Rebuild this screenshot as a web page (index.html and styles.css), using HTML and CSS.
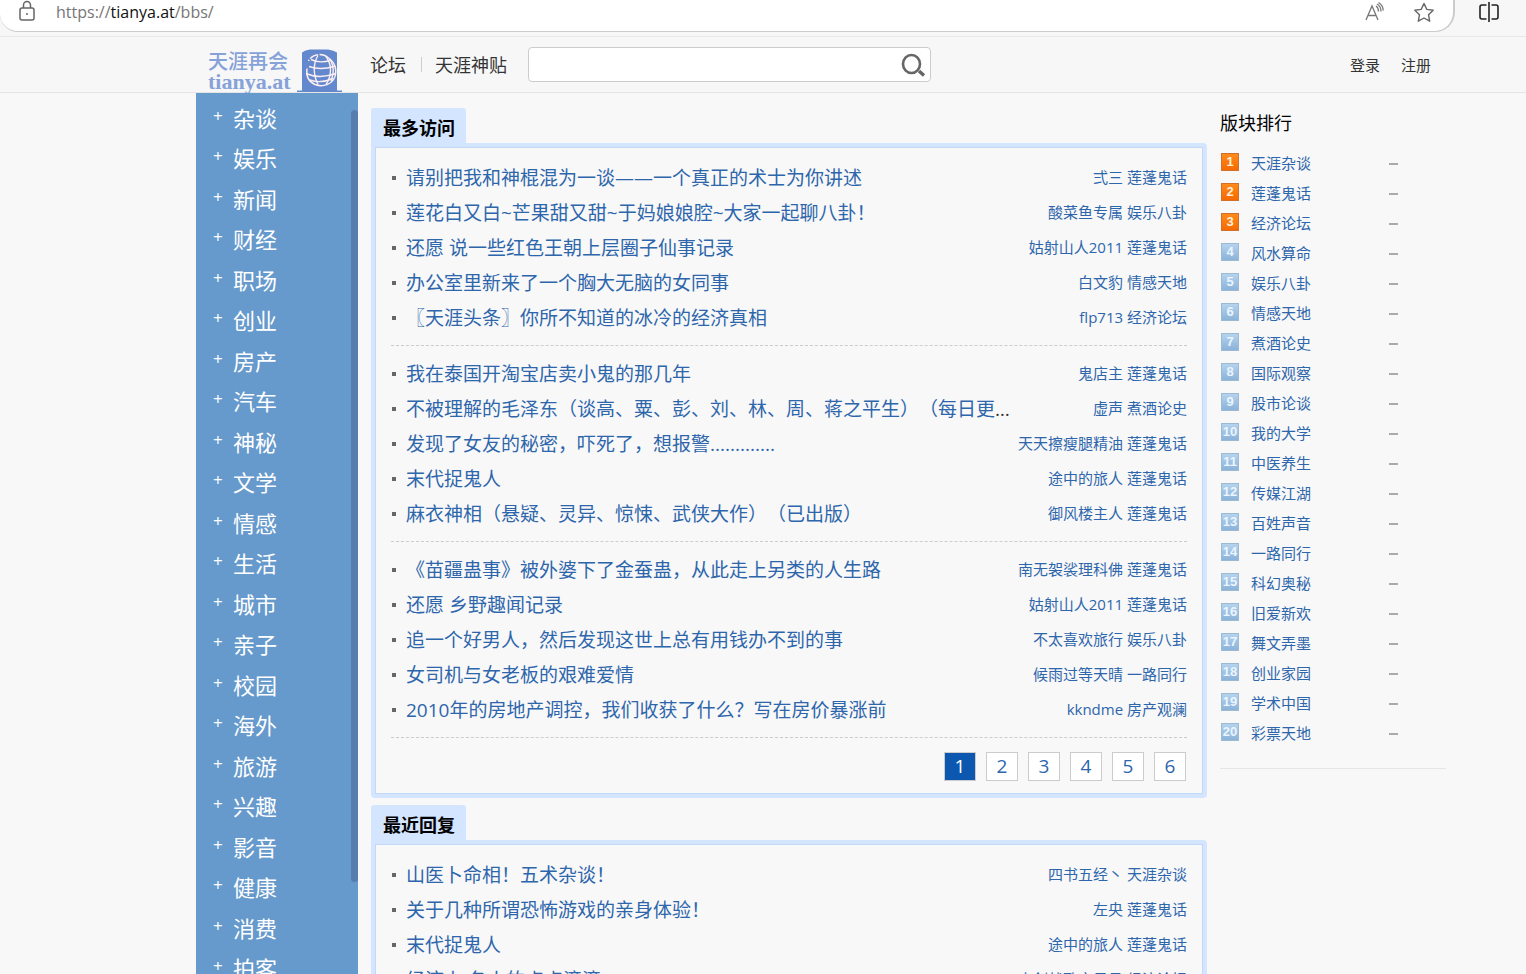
FILE: index.html
```html
<!DOCTYPE html>
<html lang="zh-CN">
<head>
<meta charset="utf-8">
<title>天涯再会</title>
<link rel="stylesheet" href="styles.css">
</head>
<body>
<div class="browser-bar">
  <div class="address">
    <svg class="lock" width="18" height="22" viewBox="0 0 18 22" fill="none" stroke="#666" stroke-width="1.5"><rect x="2" y="8" width="14" height="12" rx="2"/><path d="M5.500 8V5a3.500 3.500 0 0 1 7 0v3"/><circle cx="9" cy="14" r="1" fill="#666" stroke="none"/></svg>
    <span class="url">https://<b>tianya.at</b>/bbs/</span>
    <button class="icon-btn" aria-label="朗读"><svg width="22" height="22" viewBox="0 0 22 22" fill="none" stroke="#777" stroke-width="1.300"><path d="M2 19L8 5l6 14M4.200 14.500h7.600M12 5c1.500 1 2.500 3 2.500 5.500M13 3c2.500 1.500 4 4 4 7.500M14.500 1.500c3 2 4.700 4.500 4.700 8"/></svg></button>
    <button class="icon-btn" aria-label="收藏"><svg width="22" height="22" viewBox="0 0 22 22" fill="none" stroke="#666" stroke-width="1.400" stroke-linejoin="round"><path d="M11 2.500l2.800 5.900 6.400.8-4.700 4.500 1.200 6.500L11 17l-5.700 3.200 1.200-6.500L1.800 9.200l6.400-.8z"/></svg></button>
  </div>
  <button class="icon-btn split" aria-label="拆分屏幕"><svg width="20" height="22" viewBox="0 0 20 22" fill="none" stroke="#222" stroke-width="1.600"><path d="M7.500 4H3a2 2 0 0 0-2 2v10a2 2 0 0 0 2 2h4.500M12.500 4H17a2 2 0 0 1 2 2v10a2 2 0 0 1-2 2h-4.500M10 1v20"/></svg></button>
</div>

<header class="site-header">
  <a class="logo" href="#">
    <span class="logo-text"><span class="logo-cn">天涯再会</span><span class="logo-en">tianya.at</span></span>
    <svg width="46" height="43" viewBox="0 0 46 43"><path d="M0 43v-1.500h5V3.500Q8 1 13 .5h18q6 1 9 3v38h5V43z" fill="#6488cd"/><g fill="none" stroke="#fbeff3" stroke-width="1.400"><path d="M31 8.500C25 3.500 15 5 11.500 12" stroke-dasharray="9 1.500"/><path d="M31 8.500c7 5 9 12 7 19-3 8-12 11-20 8-7-3-9-9-8-16"/><path d="M14 10.500c6 3 12 3 19 1M12 17.500c8 3 17 2.500 26-.5M9 24.500c9 4 20 3.500 30 0M13 31c7 2.500 15 2 23-1.500"/><path d="M21 6.500c-5 8-5 19 0 29M29 7.500c6 8 6 19 0 28M33 10c4 7 4 15 1 22"/></g></svg>
  </a>
  <nav class="top-nav"><a href="#">论坛</a><a href="#">天涯神贴</a></nav>
  <form class="search">
    <input type="text" aria-label="搜索">
    <button type="button" aria-label="搜索"><svg width="26" height="26" viewBox="0 0 26 26" fill="none" stroke="#666"><ellipse cx="11.500" cy="12" rx="8.500" ry="9" stroke-width="2.600"/><path d="M19 19l5 4.500" stroke-width="3.400"/></svg></button>
  </form>
  <div class="account"><a href="#">登录</a><a href="#">注册</a></div>
</header>

<div class="page">
  <nav class="side">
    <ul id="side-list"></ul>
    <div class="thumb"></div>
  </nav>
  <main class="main">
    <section class="block">
      <h2>最多访问</h2>
      <div class="panel">
        <div id="popular"></div>
        <nav class="pager"><a class="on" href="#">1</a><a href="#">2</a><a href="#">3</a><a href="#">4</a><a href="#">5</a><a href="#">6</a></nav>
      </div>
    </section>
    <section class="block">
      <h2>最近回复</h2>
      <div class="panel"><div id="recent"></div></div>
    </section>
  </main>
  <aside class="rank">
    <h3>版块排行</h3>
    <ol id="rank-list"></ol>
  </aside>
</div>
<script src="script.js"></script>
</body>
</html>
```
FILE: styles.css
```css
* { box-sizing: border-box; }
body {
  margin: 0;
  height: 100vh;
  overflow: hidden;
  display: flex;
  flex-direction: column;
  background: #f8f8f8;
  color: #333;
  font-family: "Open Sans", "Noto Sans CJK SC", sans-serif;
  text-spacing-trim: space-all;
}
a { color: #2e66ac; text-decoration: none; }
ul, ol { list-style: none; margin: 0; padding: 0; }
h2, h3 { margin: 0; }
button { border: 0; padding: 0; background: none; }

.browser-bar {
  flex: none;
  display: flex;
  align-items: flex-start;
  height: 37px;
  padding-right: 27px;
  background: #f7f7f7;
  border-bottom: 1px solid #e8e8e8;
}
.address {
  flex: 1;
  display: flex;
  align-items: flex-start;
  height: 32px;
  padding: 0 18px 0 18px;
  background: #fff;
  border: 1px solid #ccc;
  border-width: 0 2px 1px 0;
  border-radius: 0 0 20px 18px;
}
.url {
  flex: 1;
  margin-left: 20px;
  color: #767676;
  font-size: 16px;
  line-height: 24px;
}
.url b { color: #111; font-weight: 400; }
.icon-btn { height: 24px; margin-left: 27px; }
.icon-btn svg, .lock { display: block; }
.split { margin-left: 24px; }

.site-header {
  flex: none;
  display: flex;
  align-items: center;
  height: 56px;
  padding: 0 95px 0 196px;
  background: #f7f7f7;
  border-bottom: 1px solid #e5e5e5;
}
.logo {
  display: flex;
  align-self: stretch;
  align-items: flex-end;
  width: 174px;
  padding-left: 12px;
  color: #86a2d8;
}
.logo svg { margin-left: 8px; flex: none; }
.logo-text { display: flex; flex-direction: column; width: 81px; }
.logo-cn { font-size: 20px; line-height: 20px; font-weight: 500; }
.logo-en {
  font-family: "Liberation Serif", serif;
  font-size: 22px;
  line-height: 20px;
  font-weight: 700;
}
.top-nav { display: flex; align-items: center; font-size: 18px; line-height: 28px; }
.top-nav a { color: #333; }
.top-nav a + a {
  margin-left: 15px;
  padding-left: 14px;
  background: linear-gradient(#ccc, #ccc) left center / 1px 15px no-repeat;
}
.search {
  display: flex;
  width: 403px;
  height: 35px;
  margin-left: 21px;
  padding-right: 4px;
  align-items: center;
  background: #fff;
  border: 1px solid #ccc;
  border-radius: 4px;
}
.search input { flex: 1; min-width: 0; height: 30px; border: 0; background: none; outline: 0; }
.search svg { display: block; }
.account { display: flex; gap: 21px; margin-left: auto; font-size: 15px; }
.account a { color: #333; }

.page {
  flex: 1;
  min-height: 0;
  display: flex;
  padding: 0 80px 0 196px;
}
.side {
  flex: none;
  display: flex;
  justify-content: space-between;
  width: 162px;
  padding-top: 5px;
  overflow: hidden;
  background: #6699cc;
}
.side li { height: 40px; }
.side li:nth-child(even) { height: 41px; }
.side a {
  display: flex;
  padding-left: 17px;
  color: #fff;
  font-size: 22px;
  line-height: 40px;
}
.side a::before {
  content: "+";
  width: 20px;
  font-size: 17px;
  line-height: 36px;
}
.thumb {
  width: 7px;
  height: 772px;
  margin-top: 12px;
  border-radius: 4px;
  background: #557eae;
}

.main { flex: 1; min-width: 0; margin-left: 13px; padding-top: 15px; }
.block { margin-bottom: 7px; }
.block h2 {
  width: max-content;
  height: 35px;
  padding: 0 11px 0 12px;
  border-radius: 3px 3px 0 0;
  background: #d3e5ff;
  color: #000;
  font-size: 18px;
  line-height: 40px;
}
.panel {
  padding: 13px 16px;
  border: 4px solid #d3e5ff;
  border-radius: 0 4px 4px 4px;
  box-shadow: inset 0 0 0 1px #c2d8f6;
}
.group {
  margin-bottom: 10px;
  padding-bottom: 10px;
  border-bottom: 1px dashed #ccc;
}
.group li {
  display: flex;
  align-items: center;
  height: 35px;
  font-size: 15px;
}
.group li::before {
  content: "";
  flex: none;
  width: 4px;
  height: 4px;
  margin: 0 10px 0 1px;
  background: #666;
}
.title {
  max-width: 77%;
  padding-top: 2px;
  overflow: hidden;
  white-space: nowrap;
  text-overflow: ellipsis;
  font-size: 19px;
  line-height: 33px;
}
.meta { margin-left: auto; padding-bottom: 2px; white-space: nowrap; }
.pager { display: flex; justify-content: flex-end; gap: 10px; padding: 4px 1px 0; }
.pager a {
  width: 32px;
  height: 29px;
  border: 1px solid #ccc;
  background: #fff;
  font-size: 19px;
  line-height: 27px;
  text-align: center;
}
.pager .on { background: #0c57b0; color: #fff; }

.rank {
  flex: none;
  align-self: flex-start;
  width: 226px;
  margin-left: 13px;
  padding: 15px 0 20px;
  border-bottom: 1px solid #e5e5e5;
}
.rank h3 { height: 40px; color: #000; font-size: 18px; font-weight: 400; line-height: 30px; }
.rank li { display: flex; align-items: center; height: 30px; font-size: 15px; }
.rank a { padding-bottom: 2px; }
.badge {
  width: 18px;
  height: 18px;
  margin: 0 12px 2px 1px;
  border: 1px solid #9dbad3;
  background: linear-gradient(#b5d3ee, #8bb2d8);
  color: #eaf5ff;
  font: 700 13px/16px "Liberation Sans", sans-serif;
  display: flex;
  justify-content: center;
}
.badge.hot { border-color: #d0702c; background: linear-gradient(#ff8a1c, #f56a00); color: #fff0dc; }
.trend { width: 9px; height: 2px; margin: 2px 48px 0 auto; background: #aaa; }
```
FILE: script.js
```js
const sections = "杂谈 娱乐 新闻 财经 职场 创业 房产 汽车 神秘 文学 情感 生活 城市 亲子 校园 海外 旅游 兴趣 影音 健康 消费 拍客".split(" ");
const boards = "天涯杂谈 莲蓬鬼话 经济论坛 风水算命 娱乐八卦 情感天地 煮酒论史 国际观察 股市论谈 我的大学 中医养生 传媒江湖 百姓声音 一路同行 科幻奥秘 旧爱新欢 舞文弄墨 创业家园 学术中国 彩票天地".split(" ");
const popular = [
  ["请别把我和神棍混为一谈——一个真正的术士为你讲述", "弍三", "莲蓬鬼话"],
  ["莲花白又白~芒果甜又甜~于妈娘娘腔~大家一起聊八卦！", "酸菜鱼专属", "娱乐八卦"],
  ["还愿 说一些红色王朝上层圈子仙事记录", "姑射山人2011", "莲蓬鬼话"],
  ["办公室里新来了一个胸大无脑的女同事", "白文豹", "情感天地"],
  ["〖天涯头条〗你所不知道的冰冷的经济真相", "flp713", "经济论坛"],
  ["我在泰国开淘宝店卖小鬼的那几年", "鬼店主", "莲蓬鬼话"],
  ["不被理解的毛泽东（谈高、粟、彭、刘、林、周、蒋之平生）（每日更新）", "虚声", "煮酒论史"],
  ["发现了女友的秘密，吓死了，想报警.............", "天天擦瘦腿精油", "莲蓬鬼话"],
  ["末代捉鬼人", "途中的旅人", "莲蓬鬼话"],
  ["麻衣神相（悬疑、灵异、惊悚、武侠大作）（已出版）", "御风楼主人", "莲蓬鬼话"],
  ["《苗疆蛊事》被外婆下了金蚕蛊，从此走上另类的人生路", "南无袈裟理科佛", "莲蓬鬼话"],
  ["还愿 乡野趣闻记录", "姑射山人2011", "莲蓬鬼话"],
  ["追一个好男人，然后发现这世上总有用钱办不到的事", "不太喜欢旅行", "娱乐八卦"],
  ["女司机与女老板的艰难爱情", "候雨过等天晴", "一路同行"],
  ["2010年的房地产调控，我们收获了什么？写在房价暴涨前", "kkndme", "房产观澜"]
];
const recent = [
  ["山医卜命相！五术杂谈！", "四书五经丶", "天涯杂谈"],
  ["关于几种所谓恐怖游戏的亲身体验！", "左央", "莲蓬鬼话"],
  ["末代捉鬼人", "途中的旅人", "莲蓬鬼话"],
  ["经济上 各人的点点滴滴", "大剑战歌之星号", "经济论坛"]
];

const row = ([title, user, board]) =>
  `<li><span class="title"><a href="#">${title}</a></span><span class="meta"><a href="#">${user}</a> <a href="#">${board}</a></span></li>`;

const groups = (rows) => {
  let html = "";
  for (let i = 0; i < rows.length; i += 5) {
    html += `<ul class="group">${rows.slice(i, i + 5).map(row).join("")}</ul>`;
  }
  return html;
};

document.getElementById("side-list").innerHTML = sections.map((s) => `<li><a href="#">${s}</a></li>`).join("");
document.getElementById("popular").innerHTML = groups(popular);
document.getElementById("recent").innerHTML = groups(recent);
document.getElementById("rank-list").innerHTML = boards
  .map((b, i) => `<li><span class="badge${i < 3 ? " hot" : ""}">${i + 1}</span><a href="#">${b}</a><i class="trend"></i></li>`)
  .join("");
```
